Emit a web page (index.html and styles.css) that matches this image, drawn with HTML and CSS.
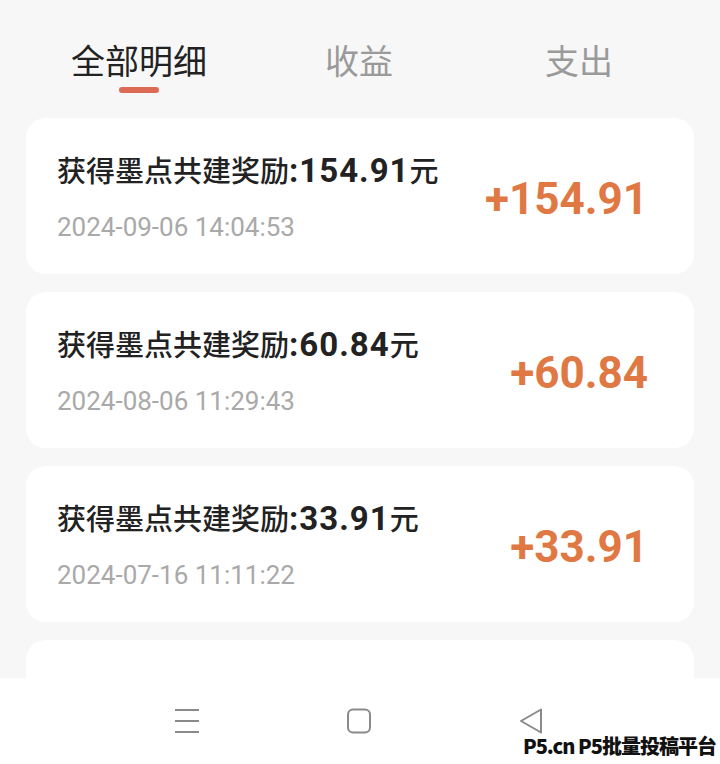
FILE: index.html
```html
<!DOCTYPE html>
<html lang="zh-CN">
<head>
  <meta charset="UTF-8">
  <title>全部明细</title>
  <link rel="stylesheet" href="styles.css">
</head>
<body>

  <div class="screen">
    <div class="tabs">
      <div class="tab active">全部明细<span class="bar"></span></div>
      <div class="tab">收益</div>
      <div class="tab">支出</div>
    </div>

    <div class="list">
      <div class="card">
        <div class="info">
          <div class="title">获得墨点共建奖励<span class="num">:154.91</span>元</div>
          <div class="date">2024-09-06 14:04:53</div>
        </div>
        <div class="amount">+154.91</div>
      </div>

      <div class="card">
        <div class="info">
          <div class="title">获得墨点共建奖励<span class="num">:60.84</span>元</div>
          <div class="date">2024-08-06 11:29:43</div>
        </div>
        <div class="amount">+60.84</div>
      </div>

      <div class="card">
        <div class="info">
          <div class="title">获得墨点共建奖励<span class="num">:33.91</span>元</div>
          <div class="date">2024-07-16 11:11:22</div>
        </div>
        <div class="amount">+33.91</div>
      </div>

      <div class="card"></div>
    </div>
  </div>

  <div class="navbar">
    <svg width="26" height="26" viewBox="0 0 26 26">
      <path d="M1 2h24M1 13h24M1 24h24" stroke="#8a8a8a" stroke-width="2.2" fill="none"/>
    </svg>
    <svg width="26" height="26" viewBox="0 0 26 26">
      <rect x="2" y="1.5" width="22" height="23" rx="5" stroke="#8a8a8a" stroke-width="2" fill="none"/>
    </svg>
    <svg width="26" height="26" viewBox="0 0 26 26">
      <path d="M23 1.5L3 13l20 11.5z" stroke="#8a8a8a" stroke-width="2" stroke-linejoin="round" fill="none"/>
    </svg>
  </div>

  <div class="watermark">P5.cn P5批量投稿平台</div>

</body>
</html>
```

FILE: styles.css
```css
body {
  margin: 0;
  width: 720px;
  height: 764px;
  overflow: hidden;
  position: relative;
  background-color: #f7f7f7;
  font-family: Roboto, "Noto Sans CJK SC", sans-serif;
}

.screen {
  height: 678px;
  overflow: hidden;
}

.tabs {
  display: grid;
  grid-template-columns: repeat(3, 1fr);
  margin: 0 31px 0 29px;
  padding-top: 42px;
}

.tab {
  display: flex;
  flex-direction: column;
  align-items: center;
  font-size: 34px;
  line-height: 40px;
  color: #9a9a9a;
}

.tab.active {
  color: #222;
}

.bar {
  display: block;
  width: 40px;
  height: 6px;
  margin-top: 5px;
  border-radius: 3px;
  background-color: #dc6a55;
}

.tab:not(.active) {
  padding-bottom: 11px;
}

.list {
  display: flex;
  flex-direction: column;
  gap: 18px;
  margin: 25px 26px 0;
}

.card {
  display: flex;
  align-items: center;
  justify-content: space-between;
  height: 156px;
  padding: 0 46px 0 31px;
  background-color: #fff;
  border-radius: 20px;
  flex-shrink: 0;
}

.info {
  padding-top: 2px;
}

.title {
  font-size: 29px;
  line-height: 36px;
  font-weight: 500;
  color: #222;
}

.num {
  font-size: 33px;
  font-weight: 700;
  letter-spacing: 1px;
}

.date {
  margin-top: 22px;
  font-size: 26px;
  line-height: 30px;
  color: #a9a9a9;
}

.amount {
  font-size: 44px;
  font-weight: 700;
  color: #e07843;
  padding-top: 6px;
}

.navbar {
  display: flex;
  justify-content: space-between;
  height: 86px;
  padding: 30px 176px 0 174px;
  box-sizing: border-box;
  background-color: #fff;
}

.watermark {
  position: absolute;
  right: 4px;
  bottom: 7px;
  font-family: "Noto Sans CJK SC", sans-serif;
  font-size: 20px;
  line-height: 22px;
  font-weight: 900;
  letter-spacing: -1px;
  color: #111;
}
```
